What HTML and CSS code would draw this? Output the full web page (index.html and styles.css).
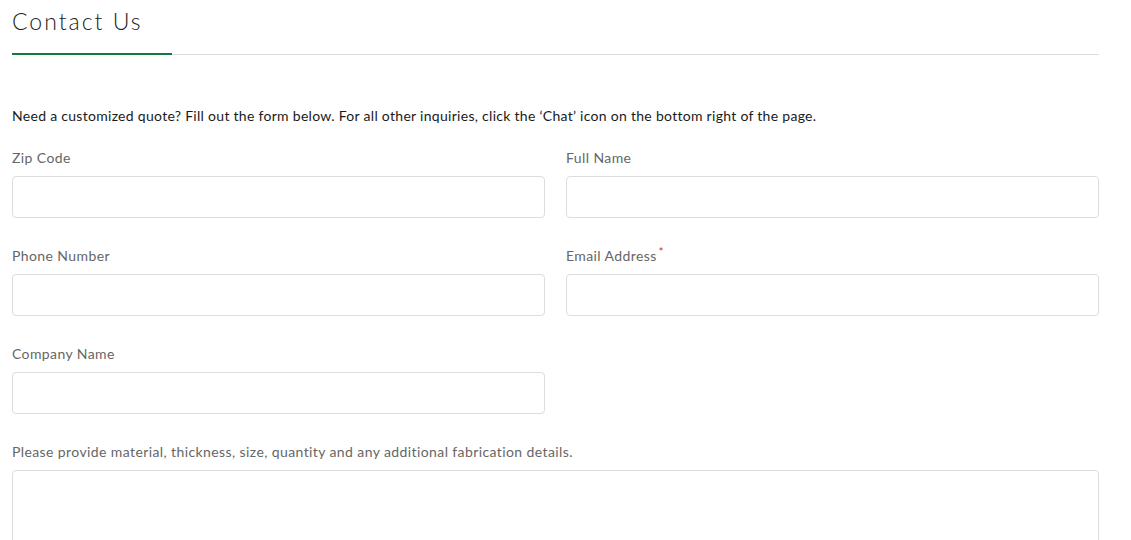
FILE: index.html
```html
<!DOCTYPE html>
<html>
<head>
<meta charset="utf-8">
<link rel="stylesheet" href="styles.css">
</head>
<body>
<div class="page">
  <div class="header">
    <h1 class="title">Contact Us</h1>
  </div>
  <p class="intro">Need a customized quote? Fill out the form below. For all other inquiries, click the ‘Chat’ icon on the bottom right of the page.</p>
  <form class="form">
    <div class="field">
      <label class="label">Zip Code</label>
      <input class="input" type="text">
    </div>
    <div class="field">
      <label class="label">Full Name</label>
      <input class="input" type="text">
    </div>
    <div class="field">
      <label class="label">Phone Number</label>
      <input class="input" type="text">
    </div>
    <div class="field">
      <label class="label">Email Address<span class="req">*</span></label>
      <input class="input" type="text">
    </div>
    <div class="field">
      <label class="label">Company Name</label>
      <input class="input" type="text">
    </div>
    <div class="field"></div>
    <div class="field full">
      <label class="label">Please provide material, thickness, size, quantity and any additional fabrication details.</label>
      <textarea class="textarea"></textarea>
    </div>
  </form>
</div>
</body>
</html>
```

FILE: styles.css
```css
* { box-sizing: border-box; }
body {
  margin: 0;
  background: #fff;
  font-family: "Lato", "Noto Sans", sans-serif;
  overflow: hidden;
}
.page {
  width: 1111px;
  padding: 0 12px;
}
.header {
  position: relative;
  padding: 5px 0 17px;
  border-bottom: 1px solid #dddddd;
}
.header::after {
  content: "";
  position: absolute;
  left: 0;
  bottom: -1px;
  width: 160px;
  height: 2px;
  background: #117a3a;
}
.title {
  margin: 0;
  font-family: "Lato", sans-serif;
  font-weight: 300;
  font-size: 23px;
  line-height: 32px;
  letter-spacing: 2px;
  color: #222;
}
.intro {
  margin: 51px 0 22px;
  font-size: 14px;
  line-height: 20px;
  letter-spacing: 0.29px;
  color: #1a1a1a;
}
.form {
  display: grid;
  grid-template-columns: 1fr 1fr;
  column-gap: 21px;
}
.field {
  display: flex;
  flex-direction: column;
  margin-bottom: 28px;
}
.field.full { grid-column: 1 / 3; }
.label {
  font-size: 14px;
  line-height: 20px;
  color: #666;
  margin-bottom: 8px;
  letter-spacing: 0.4px;
}
.req {
  color: #e02020;
  font-size: 11px;
  vertical-align: top;
  line-height: 12px;
  margin-left: 2px;
}
.input {
  height: 42px;
  border: 1px solid #dddddd;
  border-radius: 4px;
  background: #fff;
}
.textarea {
  height: 120px;
  border: 1px solid #dddddd;
  border-radius: 4px;
  resize: none;
}
```
